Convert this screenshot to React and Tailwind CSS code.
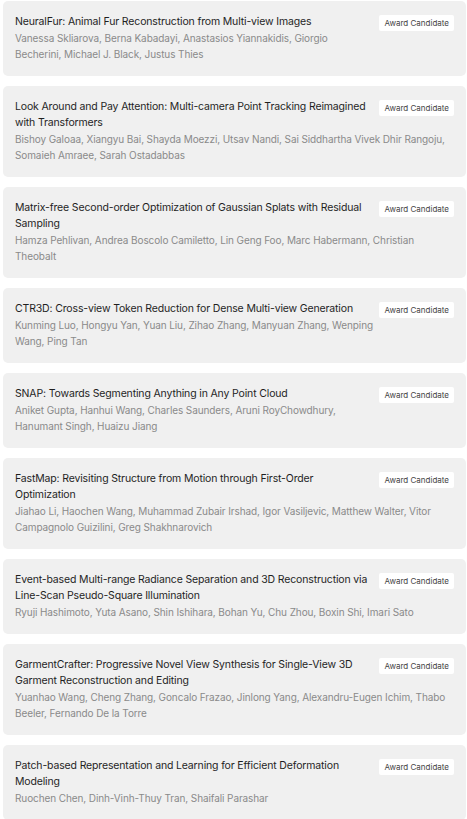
import React from 'react';

const papers = [
  {
    title: 'NeuralFur: Animal Fur Reconstruction from Multi-view Images',
    authors: 'Vanessa Skliarova, Berna Kabadayi, Anastasios Yiannakidis, Giorgio Becherini, Michael J. Black, Justus Thies',
  },
  {
    title: 'Look Around and Pay Attention: Multi-camera Point Tracking Reimagined with Transformers',
    authors: 'Bishoy Galoaa, Xiangyu Bai, Shayda Moezzi, Utsav Nandi, Sai Siddhartha Vivek Dhir Rangoju, Somaieh Amraee, Sarah Ostadabbas',
  },
  {
    title: 'Matrix-free Second-order Optimization of Gaussian Splats with Residual Sampling',
    authors: 'Hamza Pehlivan, Andrea Boscolo Camiletto, Lin Geng Foo, Marc Habermann, Christian Theobalt',
  },
  {
    title: 'CTR3D: Cross-view Token Reduction for Dense Multi-view Generation',
    authors: 'Kunming Luo, Hongyu Yan, Yuan Liu, Zihao Zhang, Manyuan Zhang, Wenping Wang, Ping Tan',
  },
  {
    title: 'SNAP: Towards Segmenting Anything in Any Point Cloud',
    authors: 'Aniket Gupta, Hanhui Wang, Charles Saunders, Aruni RoyChowdhury, Hanumant Singh, Huaizu Jiang',
  },
  {
    title: 'FastMap: Revisiting Structure from Motion through First-Order Optimization',
    authors: 'Jiahao Li, Haochen Wang, Muhammad Zubair Irshad, Igor Vasiljevic, Matthew Walter, Vitor Campagnolo Guizilini, Greg Shakhnarovich',
  },
  {
    title: 'Event-based Multi-range Radiance Separation and 3D Reconstruction via Line-Scan Pseudo-Square Illumination',
    authors: 'Ryuji Hashimoto, Yuta Asano, Shin Ishihara, Bohan Yu, Chu Zhou, Boxin Shi, Imari Sato',
  },
  {
    title: 'GarmentCrafter: Progressive Novel View Synthesis for Single-View 3D Garment Reconstruction and Editing',
    authors: 'Yuanhao Wang, Cheng Zhang, Goncalo Frazao, Jinlong Yang, Alexandru-Eugen Ichim, Thabo Beeler, Fernando De la Torre',
  },
  {
    title: 'Patch-based Representation and Learning for Efficient Deformation Modeling',
    authors: 'Ruochen Chen, Dinh-Vinh-Thuy Tran, Shaifali Parashar',
  },
];

function PaperCard({ title, authors }) {
  return (
    <div className="bg-[#f0f0f0] rounded-[5px] px-3 pt-[13px] pb-[14px] leading-4">
      <span className="float-right mt-[1px] ml-[4px] mb-2 bg-white rounded-[2px] h-4 px-[5px] text-[8px] leading-4 text-[#444]">
        Award Candidate
      </span>
      <div className="text-[10.5px] tracking-[-0.15px] text-[#1f1f1f]">{title}</div>
      <div className="text-[10px] tracking-[-0.1px] text-[#8a8a8a]">{authors}</div>
    </div>
  );
}

export default function App() {
  return (
    <div className="bg-white min-h-screen pl-[3px] pr-[1px] pt-[1px] flex flex-col gap-[10px]" style={{ fontFamily: 'Inter, "Noto Sans", sans-serif' }}>
      {papers.map((p) => (
        <PaperCard key={p.title} {...p} />
      ))}
    </div>
  );
}
